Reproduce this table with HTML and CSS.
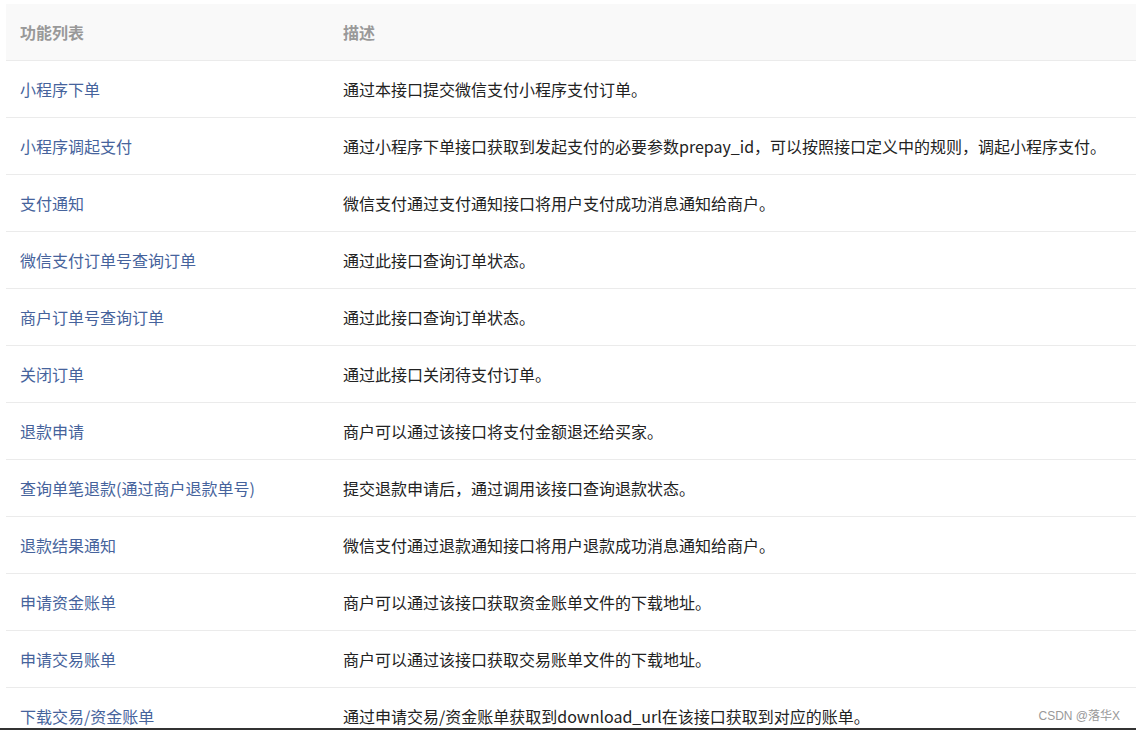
FILE: index.html
```html
<!DOCTYPE html>
<html lang="zh-CN">
<head>
<meta charset="utf-8">
<link rel="stylesheet" href="styles.css">
</head>
<body>
<div class="page">
  <table class="api-table">
    <thead>
      <tr><th class="col-name">功能列表</th><th>描述</th></tr>
    </thead>
    <tbody>
      <tr><td><a class="link">小程序下单</a></td><td>通过本接口提交微信支付小程序支付订单。</td></tr>
      <tr><td><a class="link">小程序调起支付</a></td><td>通过小程序下单接口获取到发起支付的必要参数prepay_id，可以按照接口定义中的规则，调起小程序支付。</td></tr>
      <tr><td><a class="link">支付通知</a></td><td>微信支付通过支付通知接口将用户支付成功消息通知给商户。</td></tr>
      <tr><td><a class="link">微信支付订单号查询订单</a></td><td>通过此接口查询订单状态。</td></tr>
      <tr><td><a class="link">商户订单号查询订单</a></td><td>通过此接口查询订单状态。</td></tr>
      <tr><td><a class="link">关闭订单</a></td><td>通过此接口关闭待支付订单。</td></tr>
      <tr><td><a class="link">退款申请</a></td><td>商户可以通过该接口将支付金额退还给买家。</td></tr>
      <tr><td><a class="link">查询单笔退款(通过商户退款单号)</a></td><td>提交退款申请后，通过调用该接口查询退款状态。</td></tr>
      <tr><td><a class="link">退款结果通知</a></td><td>微信支付通过退款通知接口将用户退款成功消息通知给商户。</td></tr>
      <tr><td><a class="link">申请资金账单</a></td><td>商户可以通过该接口获取资金账单文件的下载地址。</td></tr>
      <tr><td><a class="link">申请交易账单</a></td><td>商户可以通过该接口获取交易账单文件的下载地址。</td></tr>
      <tr><td><a class="link">下载交易/资金账单</a></td><td>通过申请交易/资金账单获取到download_url在该接口获取到对应的账单。</td></tr>
    </tbody>
  </table>
  <div class="watermark">CSDN @落华X</div>
</div>
</body>
</html>
```
FILE: styles.css
```css
html, body {
  margin: 0;
  padding: 0;
  background: #fff;
}
body {
  font-family: "Noto Sans CJK SC", "Microsoft YaHei", "Noto Sans", sans-serif;
  font-size: 16px;
  color: #222;
}
.page {
  position: relative;
  height: 730px;
  overflow: hidden;
  border-bottom: 2px solid #333;
  padding: 4px 0 0 6px;
  box-sizing: border-box;
}
.api-table {
  width: 1130px;
  border-collapse: collapse;
  table-layout: fixed;
}
.api-table th,
.api-table td {
  text-align: left;
  padding: 0 14px;
  height: 56px;
  border-bottom: 1px solid #ebebeb;
  vertical-align: middle;
  line-height: 24px;
  white-space: nowrap;
}
.api-table th {
  background: #f9f9f9;
  color: #999;
  font-weight: 700;
  font-size: 16px;
}
.col-name {
  width: 295px;
}
.link {
  color: #46639c;
  text-decoration: none;
}
.watermark {
  position: absolute;
  right: 16px;
  bottom: 5px;
  font-family: "Liberation Sans", "Noto Sans CJK SC", sans-serif;
  font-size: 12px;
  color: #999;
}
```
